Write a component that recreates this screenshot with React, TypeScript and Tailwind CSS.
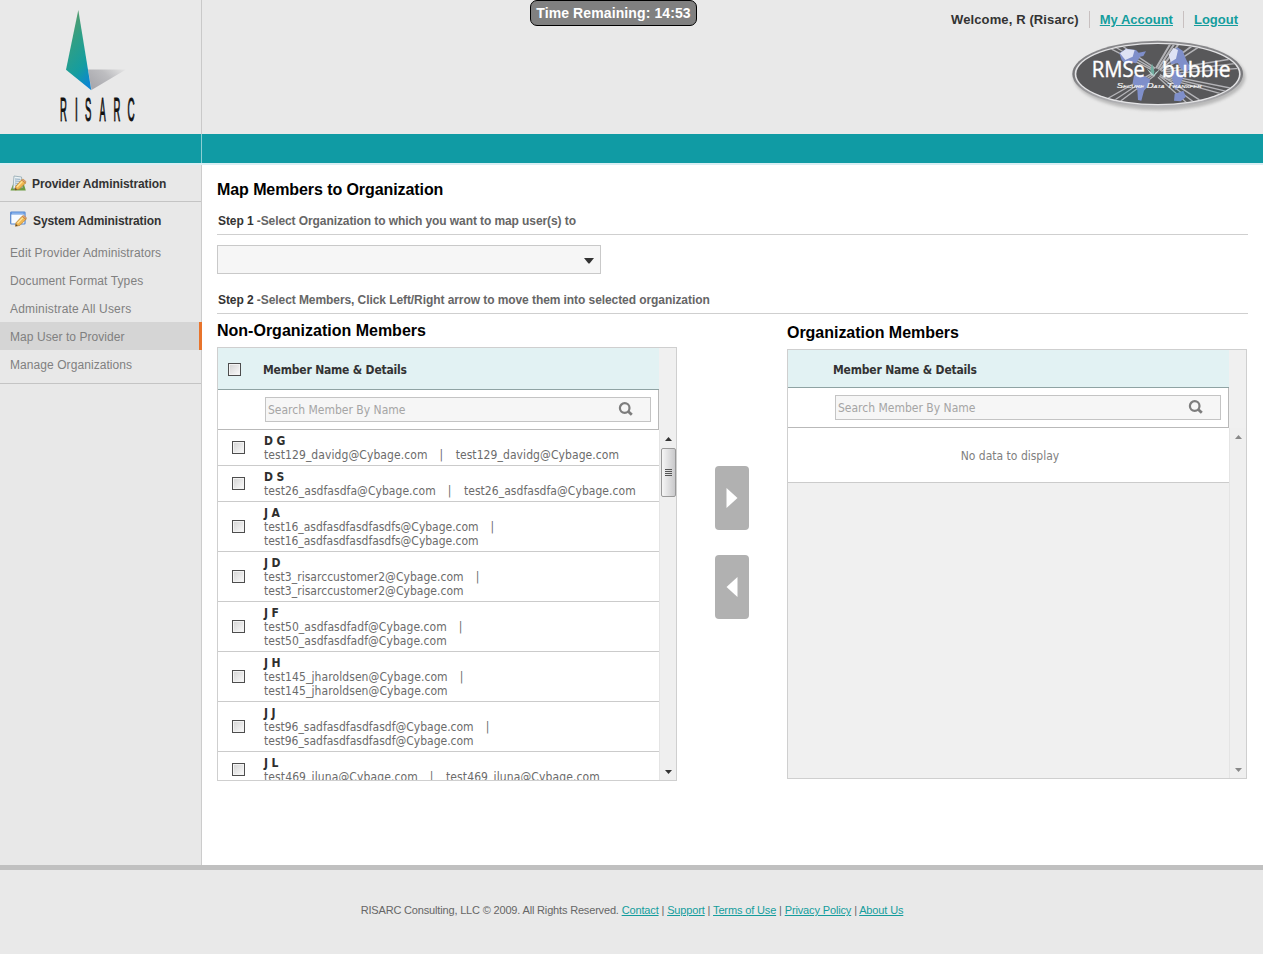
import React from "react";

const sans = "font-['Liberation_Sans',Arial,sans-serif]";
const tahoma = "font-['DejaVu_Sans_Condensed','DejaVu_Sans',sans-serif]";

type Member = {
  name: string;
  email: string;
  wrap?: boolean;
  track: string;
};

const members: Member[] = [
  { name: "D G", email: "test129_davidg@Cybage.com", track: "tracking-[0.08px]" },
  { name: "D S", email: "test26_asdfasdfa@Cybage.com", track: "tracking-[0.05px]" },
  { name: "J A", email: "test16_asdfasdfasdfasdfs@Cybage.com", wrap: true, track: "tracking-[-0.02px]" },
  { name: "J D", email: "test3_risarccustomer2@Cybage.com", wrap: true, track: "tracking-[0.03px]" },
  { name: "J F", email: "test50_asdfasdfadf@Cybage.com", wrap: true, track: "tracking-[0.06px]" },
  { name: "J H", email: "test145_jharoldsen@Cybage.com", wrap: true, track: "tracking-[0.09px]" },
  { name: "J J", email: "test96_sadfasdfasdfasdf@Cybage.com", wrap: true, track: "tracking-[0px]" },
  { name: "J L", email: "test469_jluna@Cybage.com", track: "tracking-[0.11px]" },
];

function RisarcLogo() {
  return (
    <svg width="90" height="128" viewBox="55 5 90 128" className="ml-[55px] mt-[5px] block">
      <defs>
        <linearGradient id="blade" x1="0.3" y1="0" x2="0.7" y2="1">
          <stop offset="0" stopColor="#5a9a68" />
          <stop offset="0.35" stopColor="#2f9f86" />
          <stop offset="0.72" stopColor="#149da0" />
          <stop offset="1" stopColor="#0c86d2" />
        </linearGradient>
        <linearGradient id="shade" x1="0" y1="0.6" x2="1" y2="0">
          <stop offset="0" stopColor="#a9a9ae" />
          <stop offset="0.5" stopColor="#bdbdc0" />
          <stop offset="1" stopColor="#e6e6e6" />
        </linearGradient>
      </defs>
      <path d="M88 69.500H126L91.500 90Z" fill="url(#shade)" />
      <path d="M78.300 10L66 69.700L91.300 90.300Z" fill="url(#blade)" />
      <g
        fill="#111"
        stroke="#111"
        strokeWidth="1.100"
        fontFamily="'Liberation Sans', Arial, sans-serif"
        fontSize="34"
      >
        <text transform="translate(60 120.600) scale(.28 1)">R</text>
        <text transform="translate(75 120.600) scale(.3 1)">I</text>
        <text transform="translate(85 120.600) scale(.28 1)">S</text>
        <text transform="translate(99.600 120.600) scale(.27 1)">A</text>
        <text transform="translate(113.500 120.600) scale(.28 1)">R</text>
        <text transform="translate(127.500 120.600) scale(.29 1)">C</text>
      </g>
    </svg>
  );
}

function BubbleLogo() {
  return (
    <svg width="183" height="80" viewBox="411 108 549 240" className="block overflow-visible">
      <defs>
        <linearGradient id="rim" x1="0" y1="0" x2="0" y2="1">
          <stop offset="0" stopColor="#8a8a8d" />
          <stop offset="0.5" stopColor="#77777a" />
          <stop offset="1" stopColor="#b8b8bb" />
        </linearGradient>
        <filter id="soft" x="-10%" y="-10%" width="120%" height="130%">
          <feGaussianBlur stdDeviation="5" />
        </filter>
        <clipPath id="oval">
          <ellipse cx="683" cy="222" rx="244" ry="90" />
        </clipPath>
      </defs>
      <ellipse cx="688" cy="230" rx="258" ry="101" fill="#9a9a9a" opacity="0.6" filter="url(#soft)" />
      <ellipse cx="683" cy="222" rx="256" ry="100" fill="url(#rim)" />
      <ellipse cx="683" cy="222" rx="249" ry="94" fill="#e4e4e6" />
      <ellipse cx="683" cy="222" rx="244" ry="90" fill="#58585a" />
      <g clipPath="url(#oval)">
        <g stroke="#b4b4b8" strokeWidth="4" fill="none">
          <path d="M530 140L670 212M545 135L672 208M562 128L676 205" />
          <path d="M670 218L525 300M672 222L545 306M675 226L560 312" />
          <path d="M678 205L722 130M684 208L734 130M690 211L746 132" strokeWidth="6" />
          <path d="M690 208L790 135M694 214L808 140" strokeWidth="5" />
          <path d="M700 210L935 172M700 216L940 188M700 222L940 204" />
          <path d="M700 224L940 272M698 228L930 284M695 232L905 290" />
          <path d="M688 228L790 305M684 232L770 308M690 224L812 302" />
        </g>
        <g fill="#7f8fca">
          <path d="M568 160L588 146L618 150L626 158L648 154L640 168L630 170L618 190L600 186L588 194L575 180Z" />
          <path d="M612 226L636 224L660 238L658 254L642 272L634 302L624 300L622 270L608 248Z" />
          <path d="M722 160L742 142L758 152L768 178L782 204L770 216L752 206L744 190L722 192Z" />
          <path d="M722 214L748 212L760 232L748 262L736 270L728 244Z" />
          <path d="M734 282L760 272L768 290L752 304L732 302Z" />
        </g>
        <path d="M570 160L588 147L614 150L608 170L586 180Z" fill="#dfe3f4" />
        <path d="M716 164L730 144L744 150L738 176L722 186Z" fill="#dfe3f4" />
      </g>
      <path d="M650 206L666 218L671 226L676 218L692 206L676 224L671 228L664 224Z" fill="#b9d8d4" />
      <path d="M666 190L661 213L671 226L673 214Z" fill="#6fae9f" />
      <g fill="#fff" stroke="#fff" strokeWidth="1.200" fontFamily="'Open Sans', 'Noto Sans', sans-serif" fontSize="63">
        <text x="485" y="231" textLength="160" lengthAdjust="spacingAndGlyphs">RMSe</text>
        <text x="696" y="231" textLength="206" lengthAdjust="spacingAndGlyphs">bubble</text>
      </g>
      <g fill="#f4f4f4" fontFamily="'Liberation Sans', Arial, sans-serif" fontStyle="italic">
        <text
          x="560"
          y="263"
          fontSize="19"
          stroke="#f4f4f4"
          strokeWidth="0.500"
          textLength="255"
          lengthAdjust="spacingAndGlyphs"
          className="[font-variant:small-caps]"
        >
          Secure Data Transfer
        </text>
      </g>
    </svg>
  );
}

function Pencil() {
  return (
    <g>
      <path d="M5.500 11.500L11.500 5L15.500 8L9.500 14L5 15Z" fill="#f0b650" stroke="#b57d2c" strokeWidth="0.7" />
      <path d="M7 12L12.500 6.300" stroke="#ffe49a" strokeWidth="1.300" />
      <path d="M11.500 5L13 4L16 6.500L15.500 8Z" fill="#e5a07a" stroke="#b57d2c" strokeWidth="0.500" />
      <path d="M5 15L5.400 12.800L7.300 14.400Z" fill="#5d4930" />
    </g>
  );
}

function NoteIcon() {
  return (
    <svg width="17" height="17" viewBox="0 0 17 17" className="block">
      <path d="M0.500 15.500L3 9.500H14L15.800 15.500Z" fill="#6d9c42" />
      <path d="M4 1L11.500 2L12.500 12.500L3 13.500Z" fill="#edf4f6" stroke="#8fa6ae" strokeWidth="0.800" />
      <path d="M5 4L10.500 4.300M5 6L10 6.300M4.800 8L8 8.400M4.600 10L7 10.300" stroke="#7f9db5" strokeWidth="0.900" />
      <Pencil />
    </svg>
  );
}

function WindowIcon() {
  return (
    <svg width="17" height="16" viewBox="0 0 17 16" className="block">
      <rect x="0.700" y="1" width="14.300" height="12" rx="0.800" fill="#f7fbff" stroke="#5485cd" strokeWidth="1.200" />
      <rect x="1" y="1" width="13.700" height="2.500" fill="#5f92dc" />
      <path d="M2 2.200H13.500" stroke="#a9cdf6" strokeWidth="0.800" />
      <g transform="translate(0.500 0.300)">
        <Pencil />
      </g>
    </svg>
  );
}

function Checkbox() {
  return (
    <span className="block size-[13px] shrink-0 border border-[#4d4d4d] bg-linear-to-br from-[#d3d3d3] to-[#fbfbfb] shadow-[inset_0_0_0_1px_#f3f3f3]" />
  );
}

function SearchBox() {
  return (
    <div className="ml-[47px] flex h-[25px] w-[386px] items-center justify-between border border-[#c4c4c4] bg-[#f6f6f6] pl-[2px] pr-[16px]">
      <span className="mt-px text-[12px] text-[#a5a5a5]">Search Member By Name</span>
      <svg width="16" height="16" viewBox="0 0 16 16" className="-mt-px" fill="none" stroke="#7d7d7d">
        <circle cx="6.700" cy="7" r="4.800" strokeWidth="2.200" />
        <path d="M10.300 10.500L13.800 13.800" strokeWidth="2.800" />
      </svg>
    </div>
  );
}

function ScrollArrow({ down, color }: { down?: boolean; color: string }) {
  return (
    <svg width="7" height="4" viewBox="0 0 7 4" className="block">
      <path d={down ? "M0 0H7L3.500 4Z" : "M0 4H7L3.500 0Z"} fill={color} />
    </svg>
  );
}

function MemberRow({ m }: { m: Member }) {
  return (
    <div className="flex shrink-0 items-center border-b border-[#cbcbcb] bg-white pb-[3px] pt-[4px]">
      <div className="flex w-[46px] shrink-0 pb-[2px] pl-[14px]">
        <Checkbox />
      </div>
      <div className="whitespace-nowrap text-[12px] leading-[14px] text-[#6b6b6b]">
        <div className="font-bold text-[#2e2e2e] tracking-[-0.1px]">{m.name}</div>
        <div className={m.wrap ? "block" : "flex"}>
          <span className={m.track}>{m.email}</span>
          <span className="ml-[12px] mr-[12.500px]">|</span>
          {m.wrap ? null : <span className={m.track}>{m.email}</span>}
        </div>
        {m.wrap ? <div className={m.track}>{m.email}</div> : null}
      </div>
    </div>
  );
}

const links = [
  { label: "Edit Provider Administrators", track: "tracking-[0.11px]" },
  { label: "Document Format Types", track: "tracking-[0.1px]" },
  { label: "Administrate All Users", track: "tracking-[0.18px]" },
  { label: "Map User to Provider", track: "tracking-[0.06px]", active: true },
  { label: "Manage Organizations", track: "tracking-[0.07px]" },
];
const footerLinks = ["Contact", "Support", "Terms of Use", "Privacy Policy", "About Us"];

export default function App() {
  return (
    <div className={`relative flex h-[954px] w-[1263px] flex-col overflow-hidden bg-white ${sans}`}>
      <div className="absolute left-[530px] top-0 flex h-[26px] w-[167px] items-center justify-center whitespace-nowrap rounded-[7px] border border-black bg-[#808080] text-[14px] font-bold tracking-[0.11px] text-white">
        Time Remaining: 14:53
      </div>

      <header className="flex h-[134px] shrink-0 bg-[#e9e9e9]">
        <div className="w-[202px] shrink-0 border-r border-[#c9c9c9]">
          <RisarcLogo />
        </div>
        <div className="flex flex-1 flex-col items-end">
          <div className="mr-[25px] mt-[10px] flex h-[18px] items-center whitespace-nowrap text-[13px] font-bold text-[#333]">
            <span className="pt-px tracking-[0.12px]">Welcome, R (Risarc)</span>
            <span className="ml-[10px] mr-[10px] h-[17px] w-px bg-[#c8c0c0]" />
            <a className="pt-px text-[#149d9d] underline">My Account</a>
            <span className="ml-[10px] mr-[10px] h-[17px] w-px bg-[#c8c0c0]" />
            <a className="pt-px text-[#149d9d] underline">Logout</a>
          </div>
          <div className="mr-[13px] mt-[8px]">
            <BubbleLogo />
          </div>
        </div>
      </header>

      <div className="flex h-[29px] shrink-0 bg-[#109ba4]">
        <div className="w-[202px] border-r border-[#8ccfd3]" />
      </div>
      <div className="h-[2px] shrink-0 bg-[#d9eef3]" />

      <div className="flex h-[700px] shrink-0">
        <aside className="w-[202px] shrink-0 border-r border-[#cccccc] bg-[#e8e8e8] text-[12px]">
          <div className="flex h-[37px] items-center border-b border-[#c4c4c4] pl-[10px]">
            <NoteIcon />
            <span className="ml-[5px] pt-[2px] font-bold tracking-[-0.09px] text-[#333]">Provider Administration</span>
          </div>
          <div className="border-b border-[#c4c4c4] pb-[5px]">
            <div className="flex h-[36px] items-center pl-[10px]">
              <div className="-mt-[3px]">
                <WindowIcon />
              </div>
              <span className="ml-[6px] pt-[2px] font-bold tracking-[-0.1px] text-[#333]">System Administration</span>
            </div>
            <nav>
              {links.map((l) => (
                <a
                  key={l.label}
                  className={
                    l.active
                      ? "-mr-px flex h-[28px] items-center border-r-[3px] border-[#e8742c] bg-[#d5d5d5] pl-[10px] pt-[2px] text-[#808080]"
                      : "flex h-[28px] items-center pl-[10px] pt-[2px] text-[#808080]"
                  }
                >
                  <span className={l.track}>{l.label}</span>
                </a>
              ))}
            </nav>
          </div>
        </aside>

        <main className="flex-1 pl-[15px] pr-[15px] pt-[15px]">
          <h1 className="h-[20px] text-[16px] font-bold leading-[20px] tracking-[-0.08px] text-black">
            Map Members to Organization
          </h1>
          <div className="mt-[13px] h-[22px] border-b border-[#cfcfcf] text-[12px] font-bold leading-[16px] tracking-[-0.087px] text-[#666]">
            <span className="ml-px text-[#333]">Step 1 </span>-Select Organization to which you want to map user(s) to
          </div>
          <div className="mt-[10px] flex h-[29px] w-[384px] items-center justify-end border border-[#c9c9c9] bg-[#f6f6f6] pr-[6px]">
            <svg width="10" height="6" viewBox="0 0 10 6" className="mt-[3px]">
              <path d="M0 0H10L5.500 5.500H4.500Z" fill="#333" />
            </svg>
          </div>
          <div className="mt-[18px] h-[22px] border-b border-[#cfcfcf] text-[12px] font-bold leading-[16px] tracking-[-0.075px] text-[#666]">
            <span className="ml-px text-[#333]">Step 2 </span>-Select Members, Click Left/Right arrow to move them into selected organization
          </div>

          <div className="flex">
            <section className="w-[460px] shrink-0 pt-[7px]">
              <h2 className="h-[20px] text-[16px] font-bold leading-[20px] text-black">Non-Organization Members</h2>
              <div className={`mt-[6px] flex h-[434px] flex-col border border-[#cfcfcf] bg-[#f0f0f0] ${tahoma}`}>
                <div className="flex h-[42px] w-[441px] shrink-0 items-center border-b border-[#8fa3a3] bg-[#e2f2f3] pl-[10px] pt-[2px]">
                  <Checkbox />
                  <span className="ml-[22px] text-[12px] font-bold tracking-[-0.19px] text-[#333]">Member Name &amp; Details</span>
                </div>
                <div className="flex h-[40px] w-[441px] shrink-0 items-center border-b border-r border-[#b9b9b9] bg-white">
                  <SearchBox />
                </div>
                <div className="flex min-h-0 flex-1">
                  <div className="flex w-[441px] shrink-0 flex-col overflow-hidden bg-white">
                    {members.map((m) => (
                      <MemberRow key={m.name} m={m} />
                    ))}
                  </div>
                  <div className="flex w-[17px] flex-col items-center border-l border-[#e4e4e4] bg-[#efefef] pb-[6px] pt-[7px]">
                    <ScrollArrow color="#333" />
                    <div className="mt-[7px] flex h-[49px] w-[15px] flex-col items-center justify-center gap-px rounded-[2px] border border-[#999] bg-linear-to-r from-[#f6f6f6] to-[#c9c9cb]">
                      <span className="h-px w-[7px] bg-[#555]" />
                      <span className="h-px w-[7px] bg-[#555]" />
                      <span className="h-px w-[7px] bg-[#555]" />
                      <span className="h-px w-[7px] bg-[#555]" />
                    </div>
                    <div className="mt-auto">
                      <ScrollArrow down color="#333" />
                    </div>
                  </div>
                </div>
              </div>
            </section>

            <div className="ml-[38px] mr-[38px] flex w-[34px] shrink-0 flex-col gap-[25px] pt-[152px]">
              <button className="flex h-[64px] w-[34px] items-center justify-center rounded-[4px] bg-[#b1b1b1]">
                <svg width="12" height="20" viewBox="0 0 12 20" className="-mt-px">
                  <path d="M0.500 0L11.500 10L0.500 20Z" fill="#fff" />
                </svg>
              </button>
              <button className="flex h-[64px] w-[34px] items-center justify-center rounded-[4px] bg-[#b1b1b1]">
                <svg width="12" height="20" viewBox="0 0 12 20" className="-mt-px">
                  <path d="M11.500 0L0.500 10L11.500 20Z" fill="#fff" />
                </svg>
              </button>
            </div>

            <section className="w-[460px] shrink-0 pt-[9px]">
              <h2 className="h-[20px] text-[16px] font-bold leading-[20px] tracking-[-0.03px] text-black">Organization Members</h2>
              <div className={`mt-[6px] flex h-[430px] flex-col border border-[#cfcfcf] bg-[#f0f0f0] ${tahoma}`}>
                <div className="flex h-[38px] w-[441px] shrink-0 items-center border-b border-[#8fa3a3] bg-[#e2f2f3] pl-[45px] pt-[2px]">
                  <span className="text-[12px] font-bold tracking-[-0.19px] text-[#333]">Member Name &amp; Details</span>
                </div>
                <div className="flex h-[40px] w-[441px] shrink-0 items-center border-b border-r border-[#b9b9b9] bg-white">
                  <SearchBox />
                </div>
                <div className="flex min-h-0 flex-1">
                  <div className="w-[441px] shrink-0">
                    <div className="flex h-[55px] items-center justify-center border-b border-[#cbcbcb] bg-white pl-[3px] pt-[2px] text-[12px] text-[#808080]">
                      No data to display
                    </div>
                  </div>
                  <div className="flex w-[17px] flex-col items-center justify-between border-l border-[#e4e4e4] bg-[#efefef] pb-[6px] pt-[7px]">
                    <ScrollArrow color="#888" />
                    <ScrollArrow down color="#888" />
                  </div>
                </div>
              </div>
            </section>
          </div>
        </main>
      </div>

      <footer className="flex flex-1 items-start justify-center border-t-[5px] border-[#c0c0c0] bg-[#e9e9e9] pt-[33px] text-[11px] leading-[15px] text-[#666]">
        <div className="ml-px whitespace-nowrap tracking-[-0.14px]">
          <span className="tracking-[-0.17px]">RISARC Consulting, LLC © 2009. All Rights Reserved. </span>
          {footerLinks.map((l, i) => (
            <React.Fragment key={l}>
              {i > 0 ? " | " : null}
              <a className="text-[#149d9d] underline">{l}</a>
            </React.Fragment>
          ))}
        </div>
      </footer>
    </div>
  );
}
